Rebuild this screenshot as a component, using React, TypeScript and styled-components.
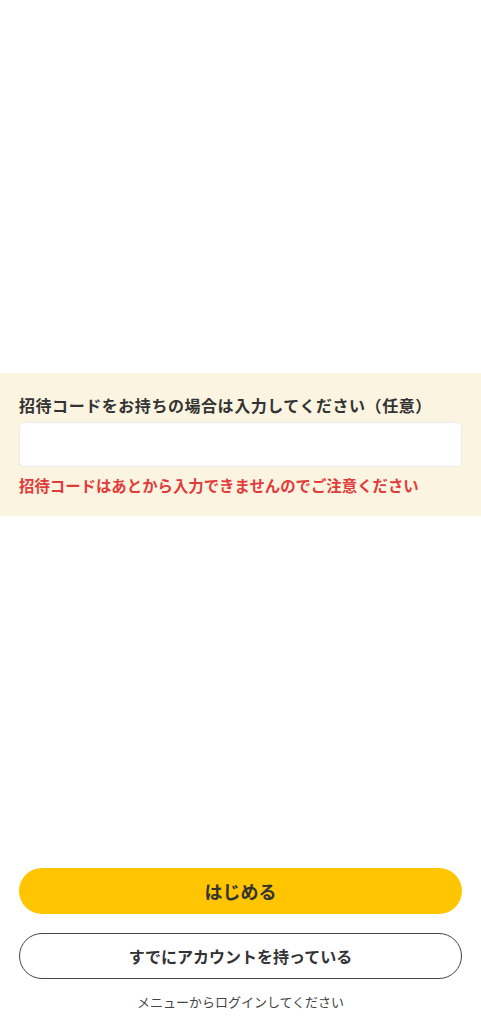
import React, { useState } from "react";
import styled, { createGlobalStyle } from "styled-components";

const GlobalStyle = createGlobalStyle`
  html, body {
    margin: 0;
    padding: 0;
    background: #ffffff;
  }
  body {
    font-family: "Noto Sans CJK JP", "Noto Sans", sans-serif;
    color: #333333;
  }
  * { box-sizing: border-box; }
`;

const Page = styled.div`
  min-height: 1024px;
  display: flex;
  flex-direction: column;
`;

const InvitePanel = styled.section`
  margin-top: 373px;
  background: #fbf4e0;
  padding: 20px 19px 20px;
  display: flex;
  flex-direction: column;
`;

const Label = styled.label`
  font-size: 16px;
  font-weight: 700;
  line-height: 24px;
  letter-spacing: 0.55px;
  color: #333333;
  margin-bottom: 5px;
`;

const CodeInput = styled.input`
  width: 100%;
  height: 45px;
  border: 1px solid #ececec;
  border-radius: 5px;
  background: #ffffff;
  padding: 0 12px;
  font-size: 16px;
  font-family: inherit;
  outline: none;
`;

const Notice = styled.p`
  margin: 7px 0 0;
  font-size: 15.4px;
  font-weight: 700;
  line-height: 22px;
  color: #e23b3b;
`;

const Footer = styled.footer`
  margin-top: auto;
  padding: 0 19px 13px;
  display: flex;
  flex-direction: column;
  align-items: stretch;
`;

const Button = styled.button<{ $primary?: boolean }>`
  height: 46px;
  border-radius: 23px;
  font-family: inherit;
  font-weight: 700;
  color: #333333;
  cursor: pointer;
  font-size: ${p => (p.$primary ? "18px" : "16px")};
  background: ${p => (p.$primary ? "#ffc500" : "#ffffff")};
  border: ${p => (p.$primary ? "none" : "1.5px solid #444444")};
  & + & {
    margin-top: 19px;
  }
`;

const Hint = styled.p`
  margin: 14px 0 0;
  text-align: center;
  font-size: 13px;
  line-height: 18px;
  color: #444444;
`;

export default function App() {
  const [code, setCode] = useState("");

  return (
    <>
      <GlobalStyle />
      <Page>
        <InvitePanel>
          <Label htmlFor="invite">招待コードをお持ちの場合は入力してください（任意）</Label>
          <CodeInput id="invite" value={code} onChange={e => setCode(e.target.value)} />
          <Notice>招待コードはあとから入力できませんのでご注意ください</Notice>
        </InvitePanel>

        <Footer>
          <Button $primary>はじめる</Button>
          <Button>すでにアカウントを持っている</Button>
          <Hint>メニューからログインしてください</Hint>
        </Footer>
      </Page>
    </>
  );
}
